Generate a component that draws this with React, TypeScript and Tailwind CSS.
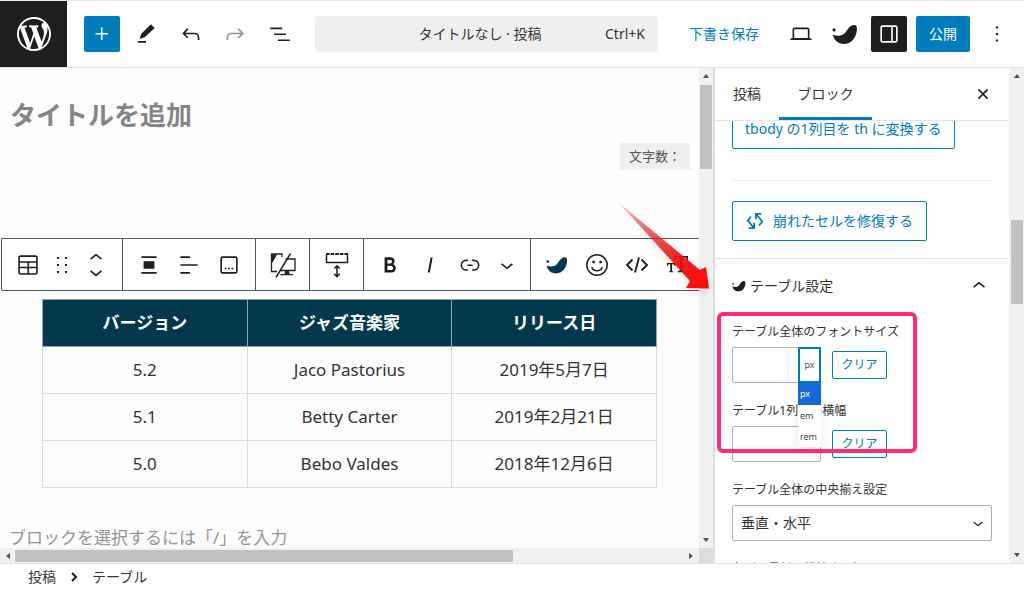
import { useState } from "react";

const paths = {
  wordpress:
    "M20 10c0-5.51-4.49-10-10-10C4.48 0 0 4.49 0 10c0 5.52 4.48 10 10 10 5.51 0 10-4.48 10-10zM7.78 15.37L4.37 6.22c.55-.02 1.17-.08 1.17-.08.5-.06.44-1.13-.06-1.11 0 0-1.45.11-2.37.11-.18 0-.37 0-.58-.01C4.12 2.69 6.87 1.11 10 1.11c2.33 0 4.45.87 6.05 2.34-.68-.11-1.65.39-1.65 1.58 0 .74.45 1.36.9 2.1.35.61.55 1.36.55 2.46 0 1.49-1.4 5-1.4 5l-3.03-8.37c.54-.02.82-.17.82-.17.5-.05.44-1.25-.06-1.22 0 0-1.44.12-2.38.12-.87 0-2.33-.12-2.33-.12-.5-.03-.56 1.2-.06 1.22l.92.08 1.26 3.41zM17.41 10c.24-.64.74-1.87.43-4.25.7 1.29 1.05 2.71 1.05 4.25 0 3.29-1.73 6.24-4.4 7.78.97-2.59 1.94-5.2 2.92-7.78zM6.1 18.09C3.12 16.65 1.11 13.53 1.11 10c0-1.3.23-2.48.72-3.59C3.25 10.3 4.67 14.2 6.1 18.09zm4.03-6.63l2.58 6.98c-.86.29-1.76.45-2.71.45-.79 0-1.57-.11-2.29-.33.81-2.38 1.62-4.74 2.42-7.1z",
  plus: "M11 12.5V17.5H12.5V12.5H17.5V11H12.5V6H11V11H6V12.5H11Z",
  pencil: "m20 6.500-3.500-3.500-8.800 8.800-1.700 4.700 4.800-1.500L20 6.500Zm-8 12H4.500V20H12v-1.500Z",
  undo: "M18.3 11.7c-.6-.6-1.4-.9-2.3-.9H6.7l2.9-3.3-1.1-1-4.5 5L8.5 16l1-1-2.7-2.7H16c.5 0 .9.2 1.3.5 1 1 1 3.4 1 4.5v.3h1.5v-.2c0-1.5 0-4.3-1.5-5.7z",
  redo: "M15.6 6.5l-1.1 1 2.9 3.3H8c-.9 0-1.7.3-2.3.9-1.4 1.5-1.4 4.2-1.4 5.6v.2h1.5v-.3c0-1.1 0-3.5 1-4.5.3-.3.7-.5 1.3-.5h9.2L14.5 15l1.1 1.1 4.6-4.6-4.6-5z",
  listView: "M3 6h11v1.5H3V6Zm3.5 5.5h11V13h-11v-1.5ZM21 17H10v1.5h11V17Z",
  laptop:
    "M20.5 16h-.7V8c0-1.1-.9-2-2-2H6.2c-1.1 0-2 .9-2 2v8h-.7c-.8 0-1.5.7-1.5 1.5h20c0-.8-.7-1.5-1.5-1.5zM5.7 8c0-.3.2-.5.5-.5h11.6c.3 0 .5.2.5.5v7.6H5.7V8z",
  drawer:
    "M18 4H6c-1.1 0-2 .9-2 2v12c0 1.1.9 2 2 2h12c1.1 0 2-.9 2-2V6c0-1.1-.9-2-2-2zm-4 14.5H6c-.3 0-.5-.2-.5-.5V6c0-.3.2-.5.5-.5h8v13zm4.5-.5c0 .3-.2.5-.5.5h-2.5v-13H18c.3 0 .5.2.5.5v12z",
  more: "M13 19h-2v-2h2v2zm0-6h-2v-2h2v2zm0-6h-2V5h2v2z",
  close:
    "M12 13.06l3.712 3.713 1.061-1.06L13.061 12l3.712-3.712-1.06-1.06L12 10.938 8.288 7.227l-1.061 1.06L10.939 12l-3.712 3.712 1.06 1.061L12 13.061z",
  chevronUp: "M6.5 12.4L12 8l5.5 4.4-.9 1.2L12 10l-4.5 3.6-1-1.2z",
  chevronDown: "M17.5 11.6L12 16l-5.5-4.4.9-1.2L12 14l4.5-3.6 1 1.2z",
  movers:
    "M6.5 5.9L12 1.500l5.5 4.4-.9 1.2L12 3.500 7.5 7.1l-1-1.2zM17.5 18.1L12 22.500l-5.5-4.4.9-1.2L12 20.500l4.5-3.6 1 1.2z",
  table:
    "M19 3H5c-1.1 0-2 .9-2 2v14c0 1.1.9 2 2 2h14c1.1 0 2-.9 2-2V5c0-1.1-.9-2-2-2zM5 4.5h14c.3 0 .5.2.5.5v3.5h-15V5c0-.3.2-.5.5-.5zm8 5.5h6.5v3.5H13V10zm-1.5 3.5h-7V10h7v3.5zm-7 5.5v-4h7v4.5H5c-.3 0-.5-.2-.5-.5zm14.5.5h-6V15h6.5v4c0 .3-.2.5-.5.5z",
  drag: "M7 6h2V4H7v2zm0 7h2v-2H7v2zm0 7h2v-2H7v2zm8-16v2h2V4h-2zm0 9h2v-2h-2v2zm0 7h2v-2h-2v2z",
  alignBlock: "M5 4h14v1.5H5V4Zm2 4.500h10v7H7v-7ZM5 18.5h14V20H5v-1.5Z",
  alignText: "M4 4h9v1.5H4V4Zm0 7.25h16v1.5H4v-1.5ZM4 18.5h9V20H4v-1.5Z",
  caption:
    "M6 4h12a2 2 0 0 1 2 2v12a2 2 0 0 1-2 2H6a2 2 0 0 1-2-2V6a2 2 0 0 1 2-2Zm0 1.5a.5.5 0 0 0-.5.5v12c0 .3.2.5.5.5h12c.3 0 .5-.2.5-.5V6c0-.3-.2-.5-.5-.5H6Zm2 9h1.7v1.5H8v-1.5Zm3.1 0h1.8v1.5h-1.8v-1.5Zm3.2 0H16v1.5h-1.7v-1.5Z",
  bold: "M14.7 11.3c1-.6 1.5-1.6 1.5-3 0-2.3-1.3-3.4-4-3.4H7v14h5.8c1.4 0 2.5-.3 3.3-1 .8-.7 1.2-1.7 1.2-2.9.1-1.9-.8-3.1-2.6-3.7zm-5.1-4h2.3c.6 0 1.1.1 1.4.4.3.3.5.7.5 1.2s-.2 1-.5 1.2c-.3.3-.8.4-1.4.4H9.6V7.3zm4.6 9c-.4.3-1 .4-1.7.4H9.6v-3.9h2.9c.7 0 1.3.2 1.7.5.4.3.6.8.6 1.5s-.2 1.2-.6 1.5z",
  italic: "M12.5 5L10 19h1.9l2.5-14z",
  link: "M10 17.389H8.444A5.194 5.194 0 1 1 8.444 7H10v1.5H8.444a3.694 3.694 0 0 0 0 7.389H10v1.5ZM14 7h1.556a5.194 5.194 0 0 1 0 10.39H14v-1.5h1.556a3.694 3.694 0 0 0 0-7.39H14V7Zm-4.5 6h5v-1.5h-5V13Z",
  bird: "M.4 8.200a1.500 1.500 0 1 1 3 0 1.500 1.500 0 0 1-3 0ZM.8 12.800C4 14 8.500 14.200 11.500 11.500 14.500 8.500 15.500 4 20.500 3.600c2.100 0 2.700 1.400 2.500 4.400-.5 7.500-5.500 13.200-12 13.200C5.500 21.200 1.500 17.500.8 12.800Z",
  textSize:
    "M8.500 3H23v4.500h-1c-.3-2.100-.9-3-2.600-3h-2V17.300c0 1.300.5 1.600 2 1.800v.9h-7v-.9c1.500-.2 2-.5 2-1.800V4.500h-2.200c-1.700 0-2.300.9-2.600 3H8.500V3ZM1 10.500h8.800v3H9c-.2-1.300-.6-1.800-1.700-1.800h-1v6.600c0 .7.300.9 1.200 1v.7H3.300v-.7c.9-.1 1.200-.3 1.200-1v-6.600h-1c-1.100 0-1.500.5-1.700 1.800H1v-3Z",
};

const Icon = ({
  name,
  className = "size-[26px]",
}: {
  name: keyof typeof paths;
  className?: string;
}) => (
  <svg
    viewBox={name === "wordpress" ? "0 0 20 20" : "0 0 24 24"}
    className={`${className} shrink-0 fill-current`}
    aria-hidden="true"
  >
    <path d={paths[name]} />
  </svg>
);

const DeviceIcon = () => (
  <svg viewBox="0 0 26 26" className="size-[26px]" fill="none" stroke="currentColor" strokeWidth="1.3">
    <path d="M12 5V2H1.500v17.500H7M15.500 7H25v11.500H10.500" />
    <path d="M2 2.500h5l-4.500 8H2z" fill="currentColor" stroke="none" />
    <path d="M15 19h4l.5 3H23v1.200H10.500V22h4z" fill="currentColor" stroke="none" />
    <path d="M20.500 1.500 6 25.500" strokeWidth="1.500" />
  </svg>
);

const SpacerIcon = () => (
  <svg viewBox="0 0 26 26" className="size-[26px]" fill="none" stroke="currentColor" strokeWidth="1.500">
    <path d="M2.500 2.500v8h21v-8" />
    <path d="M2 2h22" strokeDasharray="3.600 1" strokeWidth="1.800" />
    <path d="M13 14v10M10.200 16.500 13 13.700l2.800 2.800M10.200 21.800l2.800 2.800 2.800-2.800" />
  </svg>
);

const SmileIcon = () => (
  <svg viewBox="0 0 26 26" className="size-[26px]" fill="none" stroke="currentColor" strokeWidth="1.500" strokeLinecap="round">
    <circle cx="13" cy="13" r="10.200" />
    <path d="M8 15.500c1 4.200 9 4.200 10 0" />
    <circle cx="9.500" cy="10" r="1" fill="currentColor" strokeWidth=".8" />
    <circle cx="16.500" cy="10" r="1" fill="currentColor" strokeWidth=".8" />
  </svg>
);

const CodeIcon = () => (
  <svg viewBox="0 0 26 26" className="size-[26px]" fill="none" stroke="currentColor" strokeWidth="1.900">
    <path d="M8.500 7.500 3 13l5.500 5.500M17.500 7.500 23 13l-5.500 5.500M15 5.500l-4 15" />
  </svg>
);

const RepairIcon = () => (
  <svg viewBox="0 0 20 20" className="size-[18px]" fill="none" stroke="currentColor" strokeWidth="2">
    <path d="M5.500 5 2 9.500l6.500 8M3 18h6v-6M14.500 15 18 10.500 11.500 2.500M17 2h-6v6" />
  </svg>
);

const ScrollArrow = ({ d }: { d: string }) => (
  <svg viewBox="0 0 8 8" className="size-2 fill-[#505050]" aria-hidden="true">
    <path d={d} />
  </svg>
);

const up = "M1 6l3-4 3 4z";
const down = "M1 2l3 4 3-4z";
const left = "M6 1 2 4l4 3z";
const right = "M2 1l4 3-4 3z";

const rows = [
  ["5.2", "Jaco Pastorius", "2019年5月7日"],
  ["5.1", "Betty Carter", "2019年2月21日"],
  ["5.0", "Bebo Valdes", "2018年12月6日"],
];

const ToolButton = ({
  label,
  width = "w-10",
  children,
}: {
  label: string;
  width?: string;
  children: any;
}) => (
  <button aria-label={label} className={`${width} flex h-full shrink-0 items-center justify-center`}>
    {children}
  </button>
);

const ToolGroup = ({ children }: { children: any }) => (
  <div className="flex h-full shrink-0 border-r border-[#555] px-[6px] last:border-r-0">{children}</div>
);

const Header = () => (
  <header className="flex h-[68px] shrink-0 items-center border-y border-t-[#f5e6de] border-b-[#e4e4e4] bg-white">
    <a href="#" aria-label="WordPress" className="flex h-full w-[67px] items-center justify-center bg-[#1e1e1e] text-white">
      <Icon name="wordpress" className="size-[34px]" />
    </a>
    <button aria-label="追加" className="ml-[17px] flex size-9 items-center justify-center rounded-xs bg-[#007cba] text-white">
      <Icon name="plus" />
    </button>
    <div className="ml-1 flex">
      <button aria-label="編集" className="flex w-11 justify-center">
        <Icon name="pencil" />
      </button>
      <button aria-label="元に戻す" className="flex w-[45px] justify-center">
        <Icon name="undo" />
      </button>
      <button aria-label="やり直す" className="flex w-11 justify-center text-[#949494]">
        <Icon name="redo" />
      </button>
      <button aria-label="リスト表示" className="flex w-[45px] justify-center">
        <Icon name="listView" />
      </button>
    </div>
    <button className="mr-[31px] ml-[13px] flex h-9 flex-1 items-center rounded-sm bg-[#efefef] px-[13px] text-[#333]">
      <span className="flex-1 pl-[27px] text-center">タイトルなし · 投稿</span>
      <span>Ctrl+K</span>
    </button>
    <button className="text-[#007cba]">下書き保存</button>
    <div className="ml-5 flex items-center">
      <button aria-label="表示" className="flex w-11 justify-center">
        <Icon name="laptop" />
      </button>
      <button aria-label="SWELL" className="flex w-11 justify-center">
        <Icon name="bird" />
      </button>
      <button aria-label="設定" className="ml-1 flex size-9 items-center justify-center rounded-xs bg-[#1e1e1e] text-white">
        <Icon name="drawer" />
      </button>
      <button className="ml-[9px] h-9 rounded-xs bg-[#007cba] px-[13px] text-white">公開</button>
      <button aria-label="オプション" className="mr-[14px] ml-[14px]">
        <Icon name="more" />
      </button>
    </div>
  </header>
);

const BlockToolbar = () => (
  <div className="ml-[1px] flex h-[53px] shrink-0 overflow-hidden rounded-l-xs border border-r-0 border-[#555] bg-white">
    <ToolGroup>
      <ToolButton label="テーブル">
        <Icon name="table" />
      </ToolButton>
      <ToolButton label="ドラッグ" width="w-7">
        <Icon name="drag" className="size-[24px]" />
      </ToolButton>
      <ToolButton label="移動">
        <Icon name="movers" />
      </ToolButton>
    </ToolGroup>
    <ToolGroup>
      <ToolButton label="配置">
        <Icon name="alignBlock" />
      </ToolButton>
      <ToolButton label="テキスト配置">
        <Icon name="alignText" />
      </ToolButton>
      <ToolButton label="キャプション">
        <Icon name="caption" />
      </ToolButton>
    </ToolGroup>
    <ToolGroup>
      <ToolButton label="デバイス制限" width="w-[41px]">
        <DeviceIcon />
      </ToolButton>
    </ToolGroup>
    <ToolGroup>
      <ToolButton label="余白" width="w-[41px]">
        <SpacerIcon />
      </ToolButton>
    </ToolGroup>
    <ToolGroup>
      <ToolButton label="太字">
        <Icon name="bold" />
      </ToolButton>
      <ToolButton label="イタリック">
        <Icon name="italic" />
      </ToolButton>
      <ToolButton label="リンク">
        <Icon name="link" />
      </ToolButton>
      <ToolButton label="さらに表示" width="w-[34px]">
        <Icon name="chevronDown" />
      </ToolButton>
    </ToolGroup>
    <ToolGroup>
      <ToolButton label="SWELL装飾">
        <Icon name="bird" className="size-[22px] text-[#04384c]" />
      </ToolButton>
      <ToolButton label="絵文字">
        <SmileIcon />
      </ToolButton>
      <ToolButton label="コード">
        <CodeIcon />
      </ToolButton>
      <ToolButton label="文字サイズ">
        <Icon name="textSize" className="size-[23px]" />
      </ToolButton>
    </ToolGroup>
  </div>
);

const Canvas = () => (
  <section className="grid min-w-0 flex-1 grid-cols-[1fr_14px] grid-rows-[1fr_15px]">
    <div className="flex min-h-0 min-w-0 flex-col overflow-hidden bg-[#fdfdfd]">
      <h1 className="mt-7 ml-[10px] text-[26px] leading-[38px] font-bold text-[#858585]">タイトルを追加</h1>
      <div className="mt-[9px] mr-[9px] mb-[68px] self-end bg-[#efefef] px-[9px] text-[13px] leading-[27px] text-[#555]">
        文字数：
      </div>
      <BlockToolbar />
      <div className="mx-[42px] mt-2">
        <table className="w-full table-fixed border-collapse text-center text-[17px] text-[#333]">
          <thead>
            <tr className="h-[47px] bg-[#04384c] text-white">
              <th className="border border-[#8fa3ac]">バージョン</th>
              <th className="border border-[#8fa3ac]">ジャズ音楽家</th>
              <th className="border border-[#8fa3ac]">リリース日</th>
            </tr>
          </thead>
          <tbody>
            {rows.map((row) => (
              <tr key={row[0]} className="h-[47px]">
                {row.map((cell) => (
                  <td key={cell} className="border border-[#dcdcdc]">
                    {cell}
                  </td>
                ))}
              </tr>
            ))}
          </tbody>
        </table>
      </div>
      <p className="mt-10 ml-[9px] text-[17px] leading-[20px] whitespace-nowrap text-[#949494]">
        ブロックを選択するには「/」を入力
      </p>
    </div>
    <div className="flex flex-col items-center bg-[#f1f1f1] py-1">
      <ScrollArrow d={up} />
      <div className="mt-[5px] h-[84px] w-3 bg-[#c1c1c1]" />
      <div className="flex-1" />
      <ScrollArrow d={down} />
    </div>
    <div className="flex items-center bg-[#f1f1f1] px-1">
      <ScrollArrow d={left} />
      <div className="ml-[3px] h-3 w-[72%] bg-[#c1c1c1]" />
      <div className="flex-1" />
      <ScrollArrow d={right} />
    </div>
    <div className="bg-[#dcdcdc]" />
  </section>
);

const ClearButton = () => (
  <button className="h-7 w-[55px] rounded-xs border border-[#007cba] bg-white text-xs text-[#007cba]">
    クリア
  </button>
);

const Sidebar = () => {
  const [fontSize, setFontSize] = useState("");
  const [colWidth, setColWidth] = useState("");
  const [unit, setUnit] = useState("px");

  return (
    <aside className="flex w-[311px] shrink-0 border-l-2 border-[#dcdcdc] bg-white">
      <div className="flex min-w-0 flex-1 flex-col">
        <div className="flex h-[53px] shrink-0 items-stretch border-b border-[#e4e4e4] text-[#333]">
          <button className="w-16">投稿</button>
          <button className="w-[93px] border-b-3 border-[#007cba] pt-[3px]">ブロック</button>
          <button aria-label="閉じる" className="mr-[13px] ml-auto text-[#1e1e1e]">
            <Icon name="close" />
          </button>
        </div>
        <div className="min-h-0 flex-1 overflow-hidden">
          <div className="px-[17px]">
            <button className="-mt-3 block h-10 rounded-xs border border-[#007cba] px-3 text-[#007cba]">
              tbody の1列目を th に変換する
            </button>
            <hr className="mt-[31px] border-[#f0f0f0]" />
            <button className="mt-5 flex h-10 items-center gap-[9px] rounded-xs border border-[#007cba] px-[13px] text-[#007cba]">
              <RepairIcon />
              崩れたセルを修復する
            </button>
          </div>
          <div className="relative mt-[17px] border-t border-[#e4e4e4] px-[17px]">
            <button className="flex h-[54px] w-full items-center gap-1 text-[#333]">
              <Icon name="bird" className="size-[14px] text-[#1e1e1e]" />
              テーブル設定
              <span className="ml-auto text-[#1e1e1e]">
                <Icon name="chevronUp" />
              </span>
            </button>
            <div className="mt-[10px] text-xs text-[#333]">
              <label htmlFor="font-size" className="block leading-[18px]">
                テーブル全体のフォントサイズ
              </label>
              <div className="mt-[6px] flex items-center gap-[11px]">
                <div className="relative flex h-9 w-[89px] rounded-xs border border-[#b0b0b0]">
                  <input
                    id="font-size"
                    value={fontSize}
                    onChange={(e) => setFontSize(e.target.value)}
                    className="w-[65px] px-2 outline-none"
                  />
                  <button
                    aria-label="単位"
                    className="-my-px -mr-px flex-1 border-2 border-[#007cba] text-[9px] text-[#555]"
                  >
                    {unit}
                  </button>
                  <ul className="absolute top-[35px] -right-px z-10 w-[23px] bg-white text-[9px] shadow-lg">
                    {["px", "em", "rem"].map((item) => (
                      <li key={item}>
                        <button
                          onClick={() => setUnit(item)}
                          className={
                            item === unit
                              ? "block h-[22px] w-full bg-[#1967d2] pl-[2px] text-left text-white"
                              : "block h-[21px] w-full pl-[2px] text-left text-[#444]"
                          }
                        >
                          {item}
                        </button>
                      </li>
                    ))}
                  </ul>
                </div>
                <ClearButton />
              </div>
              <label htmlFor="col-width" className="mt-[19px] block leading-[18px]">
                テーブル1列目の横幅
              </label>
              <div className="mt-[6px] flex items-center gap-[11px]">
                <input
                  id="col-width"
                  value={colWidth}
                  onChange={(e) => setColWidth(e.target.value)}
                  className="h-9 w-[89px] rounded-xs border border-[#b0b0b0] px-2"
                />
                <ClearButton />
              </div>
              <label htmlFor="align" className="mt-[19px] block leading-[18px]">
                テーブル全体の中央揃え設定
              </label>
              <div className="relative mt-[6px]">
                <select
                  id="align"
                  className="h-9 w-full appearance-none rounded-xs border border-[#b0b0b0] bg-white px-2 text-sm"
                >
                  <option>垂直・水平</option>
                </select>
                <span className="pointer-events-none absolute top-2 right-1 text-[#1e1e1e]">
                  <Icon name="chevronDown" className="size-[20px]" />
                </span>
              </div>
              <p className="mt-[19px] leading-[18px]">各列の最低限維持する幅</p>
            </div>
            {/* highlight frame */}
            <div className="pointer-events-none absolute top-[53px] left-[2px] z-20 h-[141px] w-[200px] rounded-md border-4 border-[#ff2d6b]" />
          </div>
        </div>
      </div>
      <div className="flex w-[15px] shrink-0 flex-col items-center bg-[#f1f1f1] py-1">
        <ScrollArrow d={up} />
        <div className="mt-[140px] h-[84px] w-3 bg-[#c1c1c1]" />
        <div className="flex-1" />
        <ScrollArrow d={down} />
      </div>
      <svg
        viewBox="0 0 94 94"
        className="pointer-events-none absolute top-[202px] right-[311px] size-[94px] drop-shadow-md"
        aria-hidden="true"
      >
        <defs>
          <linearGradient id="arrow" x1="0" y1="0" x2="1" y2="1">
            <stop offset="0" stopColor="#e00000" stopOpacity=".2" />
            <stop offset=".35" stopColor="#e02020" stopOpacity=".7" />
            <stop offset=".65" stopColor="#ee1010" stopOpacity=".92" />
            <stop offset="1" stopColor="#ff0808" />
          </linearGradient>
        </defs>
        <path d="M0 1 81 68l6-3 3 21.500-23-.5 4-7z" fill="url(#arrow)" />
      </svg>
    </aside>
  );
};

const App = () => {
  return (
    <div className="relative flex h-screen min-h-[590px] flex-col overflow-hidden bg-white font-['Noto_Sans','Noto_Sans_CJK_JP',sans-serif] text-sm text-[#1e1e1e]">
      <Header />
      <main className="flex min-h-0 flex-1">
        <Canvas />
        <Sidebar />
      </main>
      <footer className="h-[27px] shrink-0 border-t border-[#e4e4e4] bg-white pl-7 text-[#333]">
        <nav aria-label="パンくず" className="flex h-full items-center gap-[13px]">
          <a href="#">投稿</a>
          <svg viewBox="0 0 10 12" className="h-3 w-[10px]" fill="none" stroke="#1e1e1e" strokeWidth="2">
            <path d="M3 2l4 4-4 4" />
          </svg>
          <a href="#">テーブル</a>
        </nav>
      </footer>
    </div>
  );
};

export default App;
